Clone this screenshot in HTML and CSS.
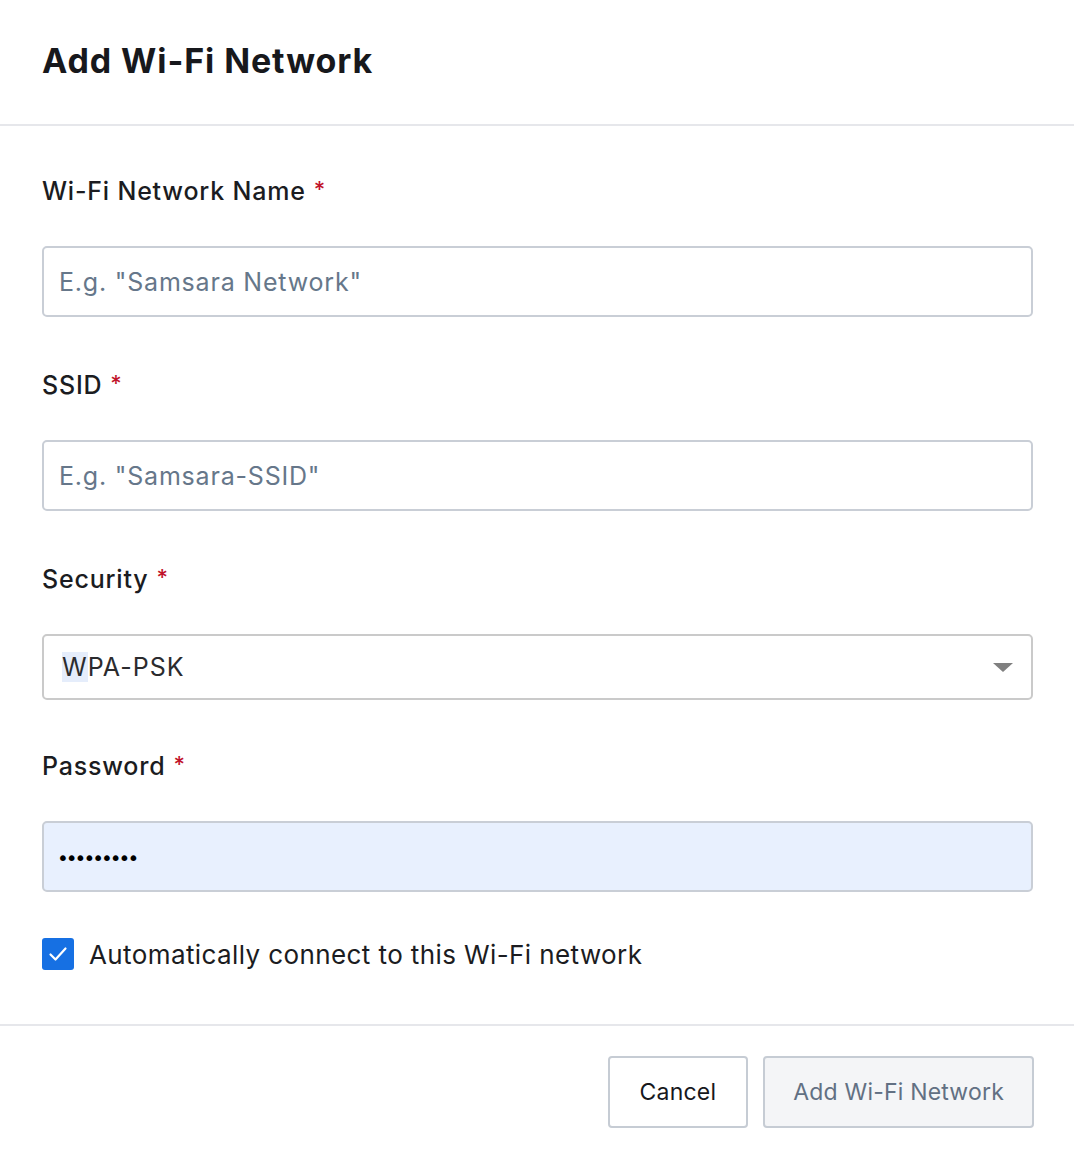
FILE: index.html
```html
<!DOCTYPE html>
<html lang="en">
<head>
<meta charset="utf-8">
<title>Add Wi-Fi Network</title>
<link rel="stylesheet" href="styles.css">
</head>
<body>
<div class="modal">
  <header class="modal-header">
    <h1 class="modal-title">Add Wi-Fi Network</h1>
  </header>
  <form class="modal-body">
    <div class="field">
      <label class="field-label" for="name">Wi-Fi Network Name<span class="req">*</span></label>
      <input class="text-input" id="name" type="text" placeholder="E.g. &quot;Samsara Network&quot;">
    </div>
    <div class="field">
      <label class="field-label" for="ssid">SSID<span class="req">*</span></label>
      <input class="text-input" id="ssid" type="text" placeholder="E.g. &quot;Samsara-SSID&quot;">
    </div>
    <div class="field field-select">
      <label class="field-label">Security<span class="req">*</span></label>
      <div class="select">
        <span class="select-value"><span class="sel-hl">W</span>PA-PSK</span>
        <svg class="select-arrow" width="20" height="10" viewBox="0 0 20 10"><path d="M0 0H20L10 9Z" fill="#808080"/></svg>
      </div>
    </div>
    <div class="field field-pw">
      <label class="field-label" for="pw">Password<span class="req">*</span></label>
      <input class="text-input autofill" id="pw" type="password" value="123456789">
    </div>
    <label class="check-row">
      <span class="checkbox">
        <svg width="20" height="16" viewBox="0 0 20 16"><path d="M2.5 8.5L7.5 13.5L17.5 2.5" fill="none" stroke="#fff" stroke-width="2.2" stroke-linecap="round" stroke-linejoin="round"/></svg>
      </span>
      <span class="check-text">Automatically connect to this Wi-Fi network</span>
    </label>
  </form>
  <footer class="modal-footer">
    <button class="btn" type="button">Cancel</button>
    <button class="btn btn-disabled" type="button">Add Wi-Fi Network</button>
  </footer>
</div>
</body>
</html>
```
FILE: styles.css
```css
* { box-sizing: border-box; }
html, body { margin: 0; padding: 0; background: #fff; }
body {
  font-family: Inter, "Noto Sans", "Liberation Sans", sans-serif;
  color: #1b1c21;
}
.modal { width: 1074px; height: 1152px; display: flex; flex-direction: column; }
.modal-header {
  height: 126px;
  border-bottom: 2px solid #e6e7eb;
  display: flex;
  align-items: center;
  padding: 0 42px 4px;
}
.modal-title {
  margin: 0;
  font-size: 34px;
  font-weight: 700;
  letter-spacing: 0.9px;
  color: #17181c;
}
.modal-body {
  padding: 47px 41px 0 42px;
  display: flex;
  flex-direction: column;
}
.field { display: flex; flex-direction: column; margin-bottom: 50px; }
.field-label {
  display: block;
  height: 36px;
  font-size: 25px;
  font-weight: 500;
  line-height: 36px;
  margin-bottom: 37px;
  letter-spacing: 0.8px;
}
.req { color: #c1142b; margin-left: 8px; font-size: 22px; line-height: 1; vertical-align: 3px; }
.text-input {
  height: 71px;
  border: 2px solid #c9ced6;
  border-radius: 5px;
  padding: 0 15px;
  font-family: inherit;
  font-size: 25px;
  letter-spacing: 0.8px;
  color: #1b1c21;
  background: #fff;
  outline: none;
}
.text-input::placeholder { color: #66778a; }
.text-input.autofill {
  background: #e8f0fe;
  font-family: "DejaVu Sans", sans-serif;
  font-size: 20px;
  letter-spacing: -3px;
  padding: 3px 13px 0;
  color: #000;
}
.select {
  position: relative;
  height: 66px;
  border: 2px solid #cacaca;
  border-radius: 5px;
  display: flex;
  align-items: center;
  padding: 0 18px;
  font-size: 25px;
  letter-spacing: 1px;
  color: #2b2b2e;
}
.sel-hl { background: #e5edfb; }
.select-arrow { position: absolute; right: 18px; top: 27px; }
.field-select { margin-bottom: 48px; }
.field-pw { margin-bottom: 46px; }
.check-row { display: flex; align-items: center; gap: 15px; height: 32px; }
.checkbox {
  width: 32px; height: 32px;
  background: #1670e3;
  border-radius: 3px;
  display: flex; align-items: center; justify-content: center;
}
.check-text { font-size: 26px; letter-spacing: 0.4px; color: #1b1c21; }
.modal-footer {
  margin-top: auto;
  border-top: 2px solid #e6e7eb;
  height: 128px;
  display: flex;
  justify-content: flex-end;
  align-items: flex-start;
  gap: 15px;
  padding: 30px 40px 0 0;
}
.btn {
  height: 72px;
  padding: 0 30px;
  border: 2px solid #c6ccd4;
  border-radius: 4px;
  background: #fff;
  font-family: inherit;
  font-size: 23px;
  letter-spacing: 0.2px;
  color: #17181c;
}
.btn-disabled { background: #f4f5f7; color: #627083; padding: 0 28px; }
```
